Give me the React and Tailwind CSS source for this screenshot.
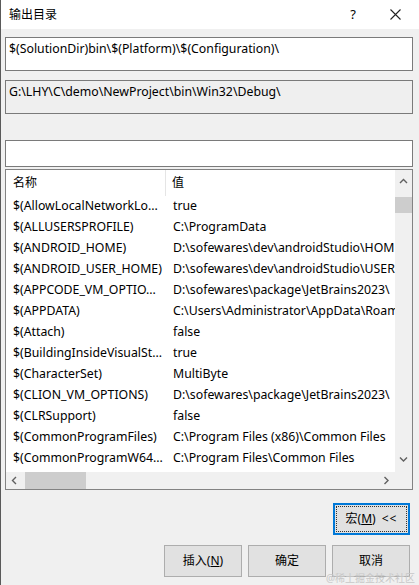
import React from "react";

const rows = [
  ["$(AllowLocalNetworkLo...", "true"],
  ["$(ALLUSERSPROFILE)", "C:\\ProgramData"],
  ["$(ANDROID_HOME)", "D:\\sofewares\\dev\\androidStudio\\HOME"],
  ["$(ANDROID_USER_HOME)", "D:\\sofewares\\dev\\androidStudio\\USER"],
  ["$(APPCODE_VM_OPTIO...", "D:\\sofewares\\package\\JetBrains2023\\"],
  ["$(APPDATA)", "C:\\Users\\Administrator\\AppData\\Roaming"],
  ["$(Attach)", "false"],
  ["$(BuildingInsideVisualSt...", "true"],
  ["$(CharacterSet)", "MultiByte"],
  ["$(CLION_VM_OPTIONS)", "D:\\sofewares\\package\\JetBrains2023\\"],
  ["$(CLRSupport)", "false"],
  ["$(CommonProgramFiles)", "C:\\Program Files (x86)\\Common Files"],
  ["$(CommonProgramW64...", "C:\\Program Files\\Common Files"],
];

const Chevron = ({ dir }) => {
  const d = {
    up: "M1 5 L4.5 1.5 L8 5",
    down: "M1 1.5 L4.5 5 L8 1.5",
    left: "M5 1 L1.5 4.5 L5 8",
    right: "M1.5 1 L5 4.5 L1.5 8",
  }[dir];
  const vertical = dir === "up" || dir === "down";
  return (
    <svg
      width={vertical ? 9 : 7}
      height={vertical ? 7 : 9}
      viewBox={vertical ? "0 0 9 7" : "0 0 7 9"}
      fill="none"
      stroke="#606060"
      strokeWidth="1.4"
    >
      <path d={d} />
    </svg>
  );
};

export default function App() {
  return (
    <div
      className="w-[419px] h-[585px] bg-[#f0f0f0] flex flex-col text-[12.3px] text-black border-l border-[#5a5a5a] overflow-hidden relative"
      style={{ fontFamily: '"Noto Sans", "Noto Sans CJK SC", sans-serif' }}
    >
      {/* title bar */}
      <div className="h-[29px] bg-white flex items-center shrink-0">
        <div className="pl-[8px] flex-1 leading-none text-[12px]">输出目录</div>
        <div className="w-[20px] text-center text-[13px] mr-[20px]">?</div>
        <div className="w-[24px] flex justify-center mr-[12px]">
          <svg width="11" height="11" viewBox="0 0 11 11" stroke="#222" strokeWidth="1.1">
            <path d="M0.5 0.5 L10.5 10.5 M10.5 0.5 L0.5 10.5" />
          </svg>
        </div>
      </div>

      <div className="flex flex-col pl-[4px] pr-[6px] pt-[8px]">
        <div className="h-[34px] bg-white border border-[#7a7a7a] px-[3px] pt-[3px] leading-[16px] whitespace-nowrap">
          $(SolutionDir)bin\$(Platform)\$(Configuration)\
        </div>
        <div className="mt-[9px] h-[34px] bg-[#efefef] border border-[#7a7a7a] px-[3px] pt-[3px] leading-[16px] whitespace-nowrap">
          G:\LHY\C\demo\NewProject\bin\Win32\Debug\
        </div>
        <div className="mt-[26px] h-[27px] bg-white border border-[#7a7a7a]" />

        {/* list */}
        <div className="mt-[2px] h-[321px] bg-white border border-[#828282] flex flex-col">
          <div className="flex flex-1 min-h-0">
            <div className="flex-1 min-w-0 overflow-hidden">
              <div className="h-[26px] flex items-center">
                <div className="w-[160px] pl-[7px] border-r border-[#e5e5e5] h-full flex items-center text-[12px]">名称</div>
                <div className="pl-[6px] text-[12px]">值</div>
              </div>
              {rows.map(([k, v]) => (
                <div key={k} className="h-[21px] flex items-center whitespace-nowrap">
                  <div className="w-[160px] pl-[7px] shrink-0">{k}</div>
                  <div className="pl-[7px]">{v}</div>
                </div>
              ))}
            </div>
            {/* vertical scrollbar */}
            <div className="w-[17px] bg-[#f0f0f0] flex flex-col items-center shrink-0">
              <div className="h-[17px] mt-[3px] flex items-center justify-center">
                <Chevron dir="up" />
              </div>
              <div className="w-[17px] h-[16px] bg-[#cdcdcd] mt-[7px]" />
              <div className="flex-1" />
              <div className="h-[17px] mb-[4px] flex items-center justify-center">
                <Chevron dir="down" />
              </div>
            </div>
          </div>
          {/* horizontal scrollbar */}
          <div className="h-[17px] flex shrink-0">
            <div className="flex-1 bg-[#f0f0f0] flex items-center">
              <div className="w-[17px] flex justify-center">
                <Chevron dir="left" />
              </div>
              <div className="w-[61px] h-[17px] bg-[#cdcdcd] ml-[2px]" />
              <div className="flex-1" />
              <div className="w-[17px] flex justify-center">
                <Chevron dir="right" />
              </div>
            </div>
            <div className="w-[17px] bg-[#f0f0f0]" />
          </div>
        </div>

        {/* buttons */}
        <div className="flex justify-end mt-[13px] mr-[3px]">
          <div className="w-[77px] h-[32px] border-2 border-[#0078d7] bg-[#e1e1e1] p-[1px]">
            <div className="w-full h-full border border-dotted border-[#333] flex items-center justify-center text-[12px]">
              <span>宏(<span className="underline">M</span>)</span>
              <span className="ml-[6px] tracking-[1px]">&lt;&lt;</span>
            </div>
          </div>
        </div>
        <div className="flex justify-end mt-[10px] gap-[6px] mr-[3px] text-[12px]">
          <div className="w-[78px] h-[32px] border border-[#adadad] bg-[#e1e1e1] flex items-center justify-center">
            <span>插入(<span className="underline">N</span>)</span>
          </div>
          <div className="w-[78px] h-[32px] border border-[#adadad] bg-[#e1e1e1] flex items-center justify-center">
            确定
          </div>
          <div className="w-[78px] h-[32px] border border-[#adadad] bg-[#e1e1e1] flex items-center justify-center">
            取消
          </div>
        </div>
      </div>
      <div className="absolute right-[4px] bottom-[0px] text-[10px] text-[#c8c8c8] leading-[13px]">
        @稀土掘金技术社区
      </div>
    </div>
  );
}
